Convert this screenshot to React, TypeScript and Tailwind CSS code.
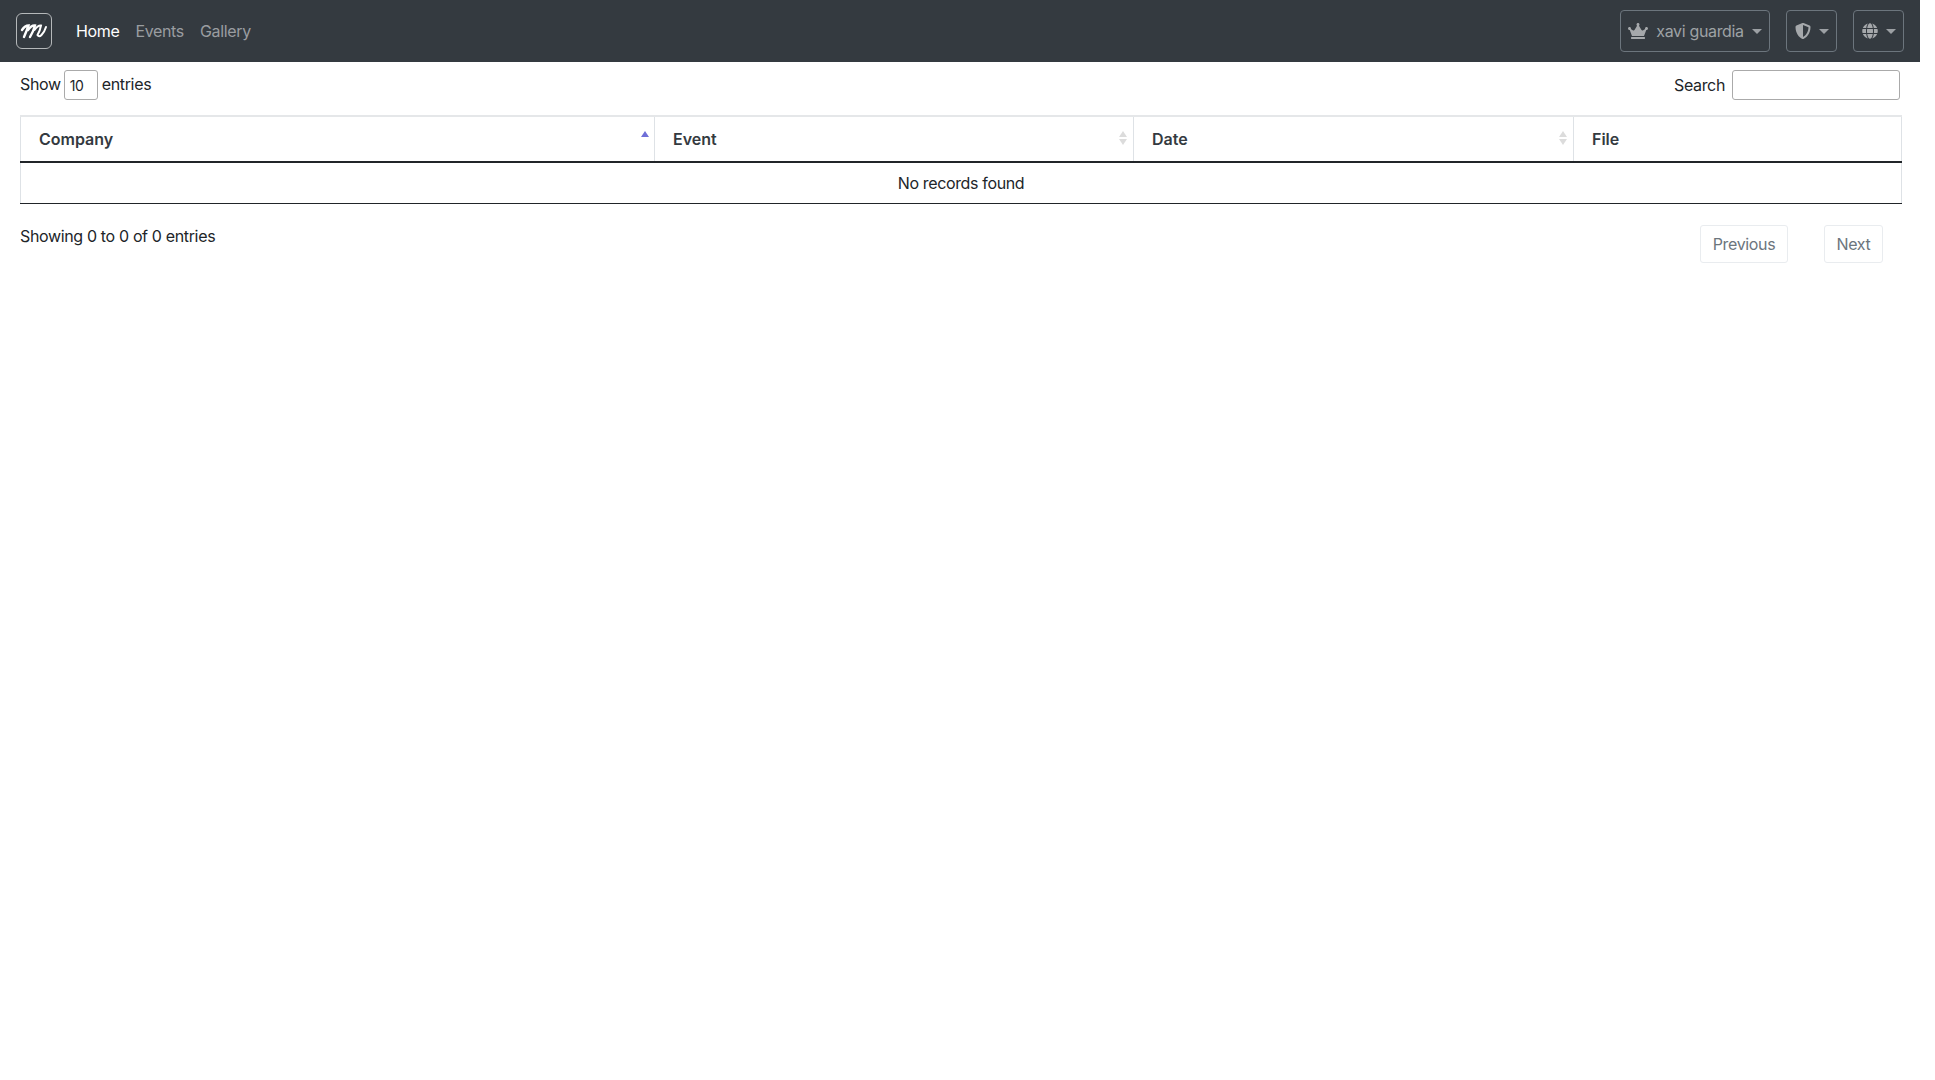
import { FaCrown, FaGlobe, FaShieldAlt } from 'react-icons/fa';

const font = { fontFamily: 'Inter, "Liberation Sans", sans-serif' };

function Caret() {
  return <span className="inline-block w-0 h-0 border-x-[5px] border-x-transparent border-t-[5px] border-t-[#9ca0a4]" />;
}

function SortIcon({ active }: { active?: boolean }) {
  return (
    <span className={`absolute top-[14px] flex flex-col gap-[2px] ${active ? 'right-[5px]' : 'right-[6px]'}`}>
      <span className={`w-0 h-0 border-x-[4px] border-x-transparent border-b-[6px] ${active ? 'border-b-[#6f6fd8]' : 'border-b-[#dcdcdc]'}`} />
      <span className={`w-0 h-0 border-x-[4px] border-x-transparent border-t-[6px] ${active ? 'border-t-transparent' : 'border-t-[#dcdcdc]'}`} />
    </span>
  );
}

function HeaderCell({ label, width, sort, active, last }: { label: string; width: number; sort?: boolean; active?: boolean; last?: boolean }) {
  return (
    <th
      style={{ width }}
      className={`relative h-[46px] pl-[18px] text-left font-semibold tracking-normal text-[#343a40] text-base border-b-2 border-b-[#212529] ${last ? '' : 'border-r border-r-[#dee2e6]'}`}
    >
      {label}
      {sort && <SortIcon active={active} />}
    </th>
  );
}

export default function App() {
  return (
    <div className="w-[1920px] bg-white min-h-[1080px] text-base text-[#212529] tracking-[-0.35px]" style={font}>
      {/* Navbar */}
      <nav className="h-[62px] bg-[#343a40] flex items-center pl-4 pr-4">
        <div className="w-[36px] h-[36px] rounded-[6px] border border-[#b5b8ba] flex items-center justify-center mr-6">
          <svg width="28" height="18" viewBox="0 0 28 18" fill="none" stroke="#ffffff" strokeLinecap="round">
            <path d="M2 8 Q5 3.5 8.5 3.5 Q7 8 4 15" strokeWidth="2.4" />
            <path d="M8 8 Q11.5 3 15 3.5 Q13.5 9 10 15" strokeWidth="2.4" />
            <path d="M14.5 8 Q18 3 21 3.5 Q20 9 17.5 13 Q19 15.5 21.5 13 Q24.5 10 26 5" strokeWidth="2" />
          </svg>
        </div>
        <div className="flex items-center gap-4">
          <span className="text-white">Home</span>
          <span className="text-[#9a9da0]">Events</span>
          <span className="text-[#9a9da0]">Gallery</span>
        </div>
        <div className="ml-auto flex items-center gap-4">
          <button className="w-[150px] h-[42px] rounded border border-[#6c757d] flex items-center justify-center gap-[8px] text-[#9ea2a5]">
            <FaCrown size={20} className="text-[#a5a8ab]" />
            <span>xavi guardia</span>
            <Caret />
          </button>
          <button className="w-[51px] h-[42px] rounded border border-[#6c757d] flex items-center justify-center gap-[8px]">
            <FaShieldAlt size={16} className="text-[#a5a8ab]" />
            <Caret />
          </button>
          <button className="w-[51px] h-[42px] rounded border border-[#6c757d] flex items-center justify-center gap-[8px]">
            <FaGlobe size={16} className="text-[#a5a8ab]" />
            <Caret />
          </button>
        </div>
      </nav>

      <div className="pl-5 pr-[19px]">
        {/* Length + search */}
        <div className="flex items-center justify-between h-[46px]">
          <div className="flex items-center gap-[3px]">
            <span className="-translate-y-px">Show</span>
            <div className="w-[34px] h-[30px] rounded-[3px] border border-[#aaaaaa] flex items-center pl-[5px] pt-[2px] text-sm">10</div>
            <span className="-translate-y-px pl-[1px]">entries</span>
          </div>
          <div className="flex items-center gap-[7px] pr-px">
            <span>Search</span>
            <input className="w-[168px] h-[30px] rounded-[3px] border border-[#aaaaaa] bg-white outline-none" />
          </div>
        </div>

        {/* Table */}
        <table className="w-[1881px] table-fixed border-collapse border-x border-x-[#dee2e6] border-t-2 border-t-[#e5e7e9] mt-[7px]">
          <thead>
            <tr>
              <HeaderCell label="Company" width={634} sort active />
              <HeaderCell label="Event" width={479} sort />
              <HeaderCell label="Date" width={440} sort />
              <HeaderCell label="File" width={328} last />
            </tr>
          </thead>
          <tbody>
            <tr>
              <td colSpan={4} className="h-[41px] text-center border-b border-b-[#212529]">No records found</td>
            </tr>
          </tbody>
        </table>

        {/* Footer */}
        <div className="flex justify-between mt-5">
          <span className="text-[#212529]">Showing 0 to 0 of 0 entries</span>
          <div className="flex gap-9 pr-[18px] pt-[1px]">
            <span className="w-[88px] h-[38px] rounded-[3px] border border-[#e9ecef] flex items-center justify-center text-[#6c757d]">Previous</span>
            <span className="w-[59px] h-[38px] rounded-[3px] border border-[#e9ecef] flex items-center justify-center text-[#6c757d]">Next</span>
          </div>
        </div>
      </div>
    </div>
  );
}
